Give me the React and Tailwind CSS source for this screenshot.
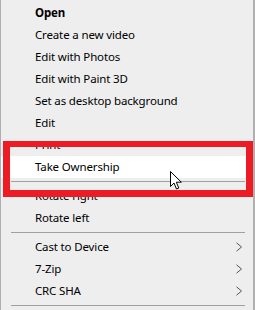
import React from 'react';

const items = [
  { label: 'Open', bold: true },
  { label: 'Create a new video' },
  { label: 'Edit with Photos' },
  { label: 'Edit with Paint 3D' },
  { label: 'Set as desktop background' },
  { label: 'Edit' },
  { label: 'Print' },
  { label: 'Take Ownership', hover: true },
  { sep: true },
  { label: 'Rotate right' },
  { label: 'Rotate left' },
  { sep: true },
  { label: 'Cast to Device', sub: true },
  { label: '7-Zip', sub: true },
  { label: 'CRC SHA', sub: true },
  { sep: true },
];

function Chevron() {
  return (
    <svg width="8" height="10" viewBox="0 0 8 10" className="mr-[10px]">
      <path d="M1.5 0.8 L6.5 5 L1.5 9.2" fill="none" stroke="#555" strokeWidth="1" />
    </svg>
  );
}

function Cursor() {
  return (
    <svg width="13" height="20" viewBox="0 0 13 20" className="absolute left-[169px] top-[171px]">
      <path
        d="M0.5 0.5 L0.5 15.5 L4 12 L6.5 18 L8.8 17 L6.3 11.2 L11.3 11.2 Z"
        fill="#fff"
        stroke="#000"
        strokeWidth="1"
        strokeLinejoin="miter"
      />
    </svg>
  );
}

export default function App() {
  return (
    <div
      className="relative w-[255px] h-[310px] overflow-hidden bg-[#eeeeee] border-l border-l-[#a9b0b8] border-r-2 border-r-[#b0b0b0] text-[11.5px] tracking-[-0.15px] text-black"
      style={{ fontFamily: '"Noto Sans", "Liberation Sans", sans-serif' }}
    >
      <div className="pt-[2px]">
        {items.map((it, i) =>
          it.sep ? (
            <div key={i} className="h-[7px] flex items-center pl-[10px] pr-[8px]">
              <div className="w-full h-px bg-[#a0a0a0]" />
            </div>
          ) : (
            <div
              key={i}
              className={`h-[22px] flex items-center justify-between pl-[34px] ${it.hover ? 'bg-white' : ''}`}
            >
              <span className={it.bold ? 'font-bold' : ''}>{it.label}</span>
              {it.sub && <Chevron />}
            </div>
          )
        )}
      </div>

      {/* red highlight box drawn over the menu */}
      <div className="absolute left-[2px] top-[141px] w-[250px] h-[56px] border-[7px] border-[#ed1c24] border-t-[6px]" />
      <Cursor />
    </div>
  );
}
